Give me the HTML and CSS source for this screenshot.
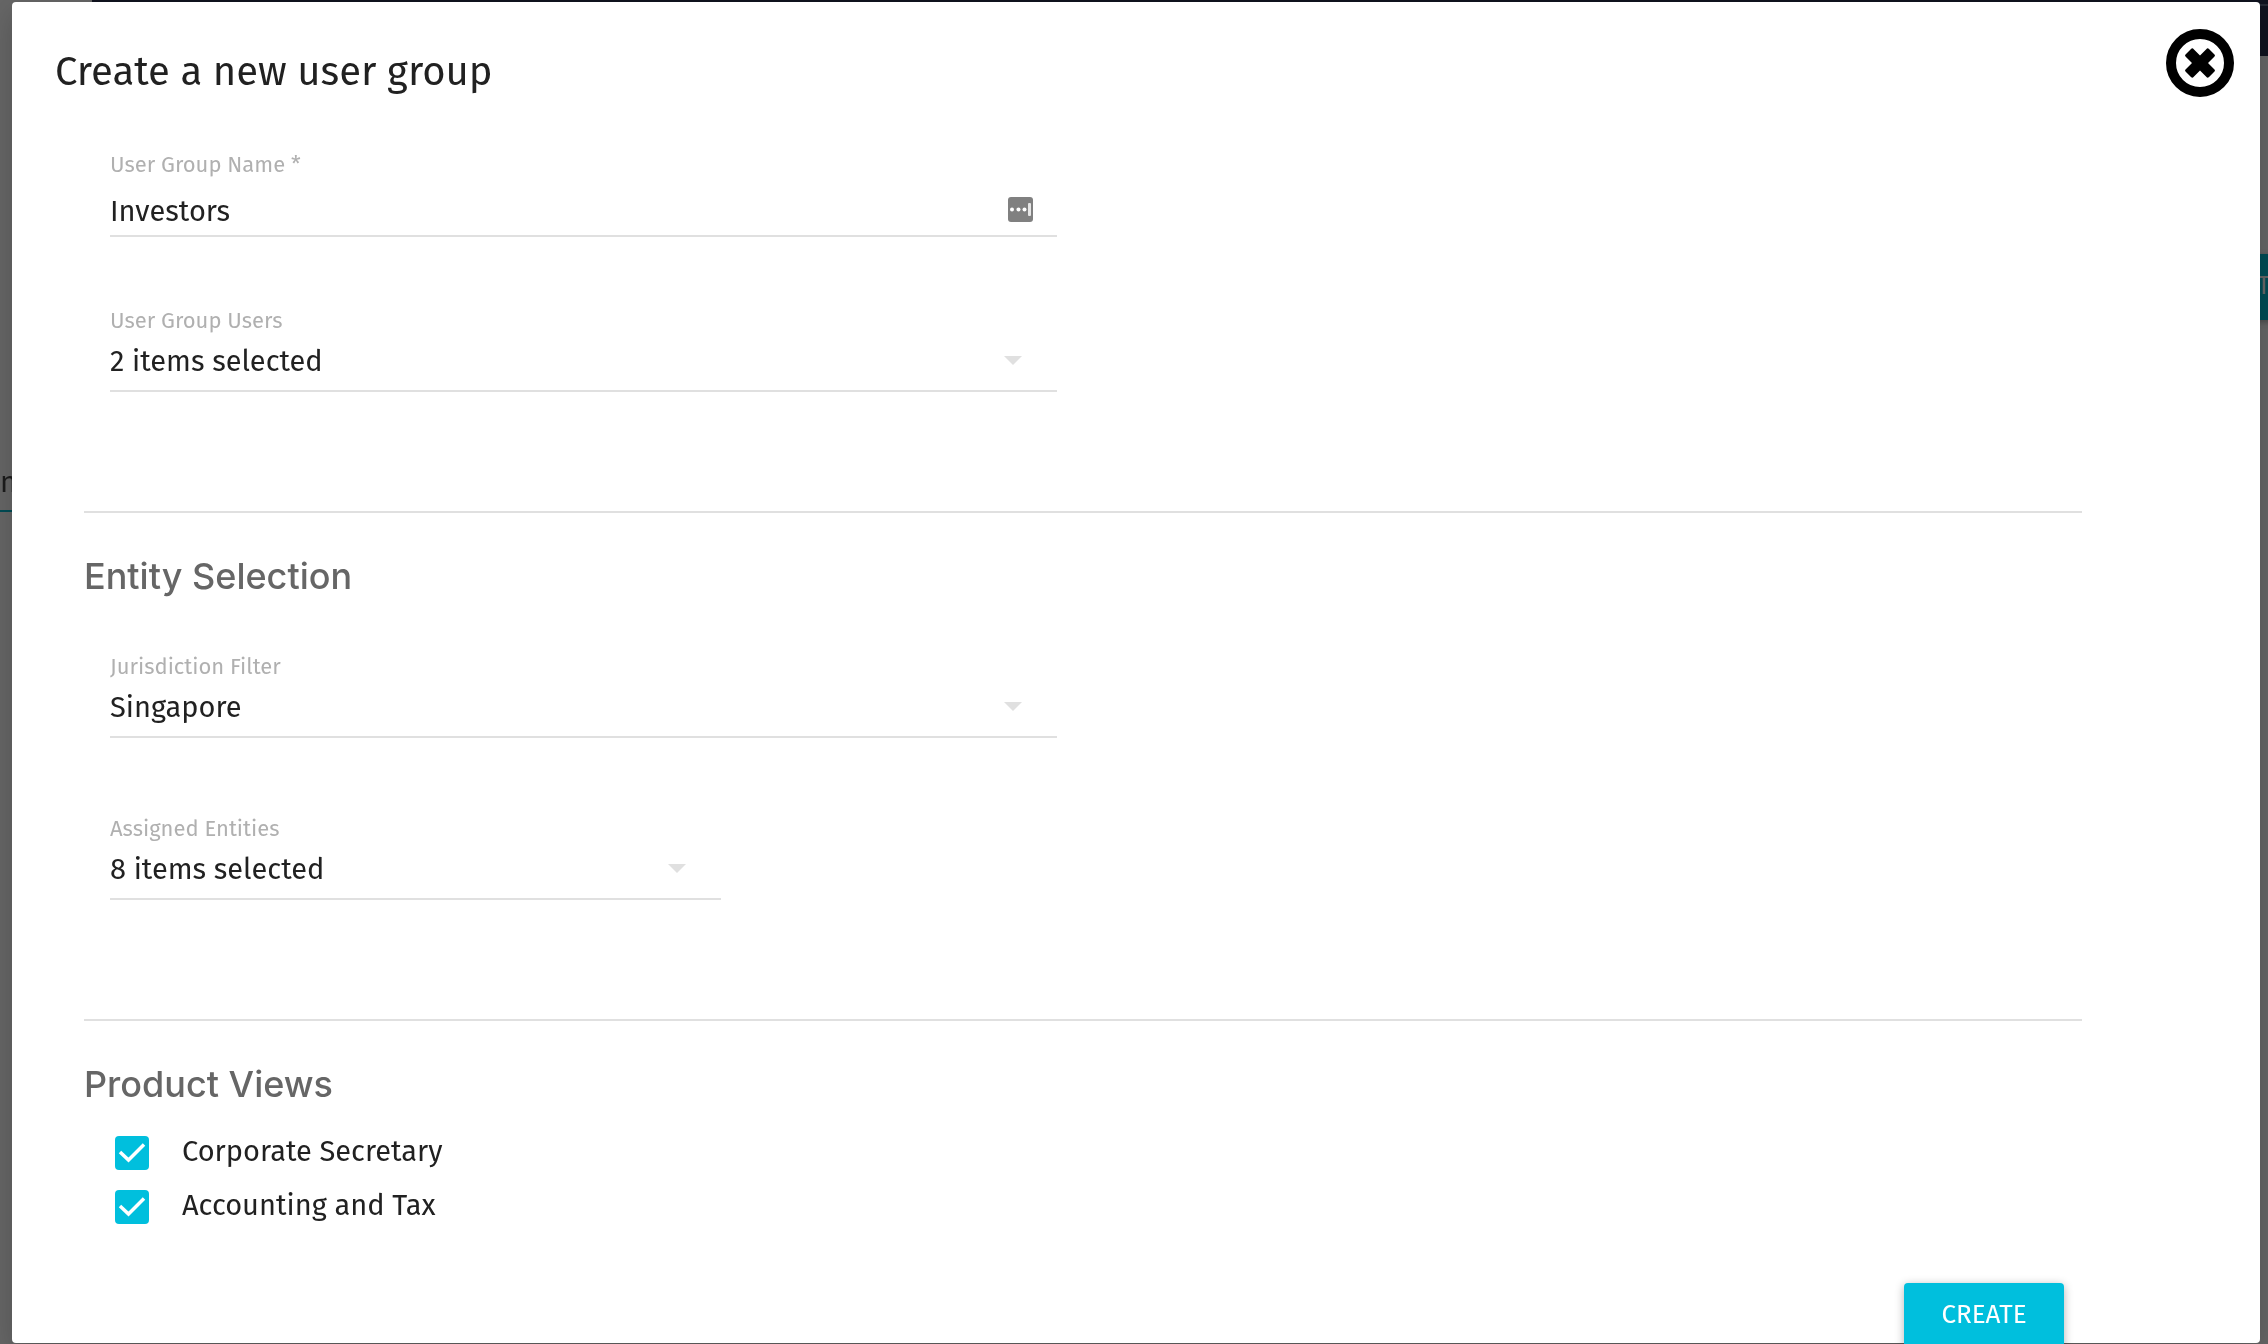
FILE: index.html
```html
<!DOCTYPE html>
<html lang="en">
<head>
    <meta charset="UTF-8">
    <meta name="viewport" content="width=device-width, initial-scale=1.0">
    <title>Create a new user group</title>
    <link rel="stylesheet" href="styles.css">
</head>
<body>

    <!-- page behind the dialog -->
    <div class="page" aria-hidden="true">
        <div class="page-bar"></div>
        <button class="page-create" tabindex="-1">CREATE</button>
        <div class="page-tab">n</div>
    </div>

    <div class="dialog" role="dialog" aria-labelledby="dialogTitle">
        <div class="dialog-header">
            <h1 id="dialogTitle">Create a new user group</h1>
            <button class="close-button" aria-label="Close">
                <svg viewBox="0 0 68 68" width="68" height="68">
                    <circle cx="34" cy="34" r="29" fill="none" stroke="#000" stroke-width="10"/>
                    <path d="M27 19.500 34 26.500 41 19.500Q42 19 43 20L48.500 25.500Q49.500 26.500 48.500 27.500L42 34 48.500 40.500Q49.500 41.500 48.500 42.500L43 48Q42 49 41 48.500L34 41.500 27 48.500Q26 49 25 48L19.500 42.500Q18.500 41.500 19.500 40.500L26 34 19.500 27.500Q18.500 26.500 19.500 25.500L25 20Q26 19 27 19.500Z"/>
                </svg>
            </button>
        </div>

        <form class="group-form">
            <section>
                <div class="field name-field">
                    <label for="groupName">User Group Name *</label>
                    <div class="control">
                        <input type="text" id="groupName" value="Investors">
                        <svg class="key-icon" viewBox="0 0 25 25" width="25" height="25">
                            <rect width="25" height="25" rx="3" fill="#808080"/>
                            <circle cx="4" cy="12.500" r="2" fill="#fff"/>
                            <circle cx="10.500" cy="12.500" r="2" fill="#fff"/>
                            <circle cx="16.500" cy="12.500" r="2" fill="#fff"/>
                            <rect x="20" y="6" width="3" height="13" rx="1" fill="#e6e6e6"/>
                        </svg>
                    </div>
                </div>
                <div class="field">
                    <label for="groupUsers">User Group Users</label>
                    <div class="control arrow">
                        <select id="groupUsers"><option>2 items selected</option></select>
                    </div>
                </div>
            </section>

            <section>
                <h2>Entity Selection</h2>
                <div class="field">
                    <label for="jurisdiction">Jurisdiction Filter</label>
                    <div class="control arrow">
                        <select id="jurisdiction"><option>Singapore</option></select>
                    </div>
                </div>
                <div class="field narrow">
                    <label for="entities">Assigned Entities</label>
                    <div class="control arrow">
                        <select id="entities"><option>8 items selected</option></select>
                    </div>
                </div>
            </section>

            <section>
                <h2>Product Views</h2>
                <div class="checks">
                    <label class="check">
                        <input type="checkbox" checked>
                        <svg viewBox="0 0 34 34" width="34" height="34"><path d="M5 16 13.500 24 29 8.500" fill="none" stroke="#fff" stroke-width="3.500"/></svg>
                        <span>Corporate Secretary</span>
                    </label>
                    <label class="check">
                        <input type="checkbox" checked>
                        <svg viewBox="0 0 34 34" width="34" height="34"><path d="M5 16 13.500 24 29 8.500" fill="none" stroke="#fff" stroke-width="3.500"/></svg>
                        <span>Accounting and Tax</span>
                    </label>
                </div>
            </section>

            <div class="actions">
                <button type="button" class="create-button">CREATE</button>
            </div>
        </form>
    </div>

</body>
</html>
```

FILE: styles.css
```css
* {
    box-sizing: border-box;
}
body {
    margin: 0;
    height: 100vh;
    overflow: hidden;
    font-family: "Fira Sans", "Noto Sans", sans-serif;
    font-size: 29px;
    line-height: 40px;
    color: #212121;
    background-color: #666;
}
button, input, select {
    font: inherit;
    color: inherit;
    border: none;
    padding: 0;
}
button {
    cursor: pointer;
}

/* dimmed page */
.page {
    position: fixed;
    inset: 0;
    overflow: hidden;
}
.page-bar {
    height: 56px;
    margin-left: 92px;
    background: linear-gradient(#10131f 4px, #252a35 4px, #252a35 6px, #10131f 6px);
}
.page-create {
    position: absolute;
    top: 254px;
    right: -54px;
    width: 160px;
    height: 66px;
    padding-bottom: 2px;
    font-size: 26px;
    color: #666;
    background-color: #004c55;
    box-shadow: 0 2px 6px rgba(0, 0, 0, 0.3);
}
.page-tab {
    position: absolute;
    top: 463px;
    left: 0;
    height: 49px;
    color: #1c1c1c;
    border-bottom: 2px solid #004c55;
}

.dialog {
    position: relative;
    height: calc(100vh - 3px);
    margin: 2px 8px 1px 12px;
    background-color: #fff;
    border-radius: 4px;
    box-shadow: 0 10px 30px rgba(0, 0, 0, 0.2);
}
.dialog-header {
    display: flex;
    justify-content: space-between;
    align-items: flex-start;
    padding: 27px 26px 0 43px;
}
h1 {
    margin: 19px 0 0;
    font-size: 40px;
    line-height: 48px;
    font-weight: 400;
}
.close-button {
    display: flex;
    background: none;
}

.group-form {
    padding: 53px 178px 0 72px;
}
section + section {
    margin-top: 119px;
    padding-top: 41px;
    border-top: 2px solid #e0e0e0;
}
section:last-of-type {
    padding-bottom: 59px;
}
h2 {
    margin: 0;
    font-family: Inter, sans-serif;
    font-size: 36px;
    line-height: 44px;
    font-weight: 500;
    color: #666;
}

.field {
    width: 50%;
    padding: 0 26px;
}
.field.narrow {
    width: 33.2%;
    margin-top: 76px;
}
.name-field {
    margin-bottom: 69px;
}
h2 + .field {
    margin-top: 54px;
}
.field label {
    display: block;
    margin-bottom: 6px;
    font-size: 22px;
    line-height: 30px;
    color: #b0b0b0;
}
.name-field label {
    margin-bottom: 12px;
}
.control {
    position: relative;
    border-bottom: 2px solid #e0e0e0;
}
.control input,
.control select {
    display: block;
    width: 100%;
    height: 40px;
    background: none;
    outline: none;
    appearance: none;
}
.name-field .control {
    padding-bottom: 3px;
}
.arrow {
    padding-bottom: 8px;
}
.arrow::after {
    content: "";
    position: absolute;
    top: 14px;
    right: 35px;
    border: 9px solid transparent;
    border-top-color: #e0e0e0;
    border-bottom: none;
    pointer-events: none;
}
.key-icon {
    position: absolute;
    top: 5px;
    right: 24px;
}

.checks {
    display: flex;
    flex-direction: column;
    align-items: flex-start;
    gap: 18px;
    margin-top: 28px;
    padding-left: 31px;
}
.check {
    display: grid;
    grid-template-columns: 34px auto;
    column-gap: 33px;
    align-items: end;
    line-height: 36px;
    cursor: pointer;
}
.check input,
.check svg {
    grid-area: 1 / 1;
    width: 34px;
    height: 34px;
    margin: 0;
}
.check input {
    appearance: none;
    border-radius: 4px;
}
.check input:checked {
    background-color: #00bfdd;
}
.check svg {
    z-index: 1;
    pointer-events: none;
}
.check input:not(:checked) {
    border: 3px solid #757575;
}
.actions {
    display: flex;
    justify-content: flex-end;
    padding-right: 18px;
}
.create-button {
    width: 160px;
    height: 66px;
    padding-bottom: 2px;
    font-size: 26px;
    color: #fff;
    background-color: #00bfdd;
    border-radius: 4px;
    box-shadow: 0 2px 10px rgba(0, 0, 0, 0.3);
}
```
